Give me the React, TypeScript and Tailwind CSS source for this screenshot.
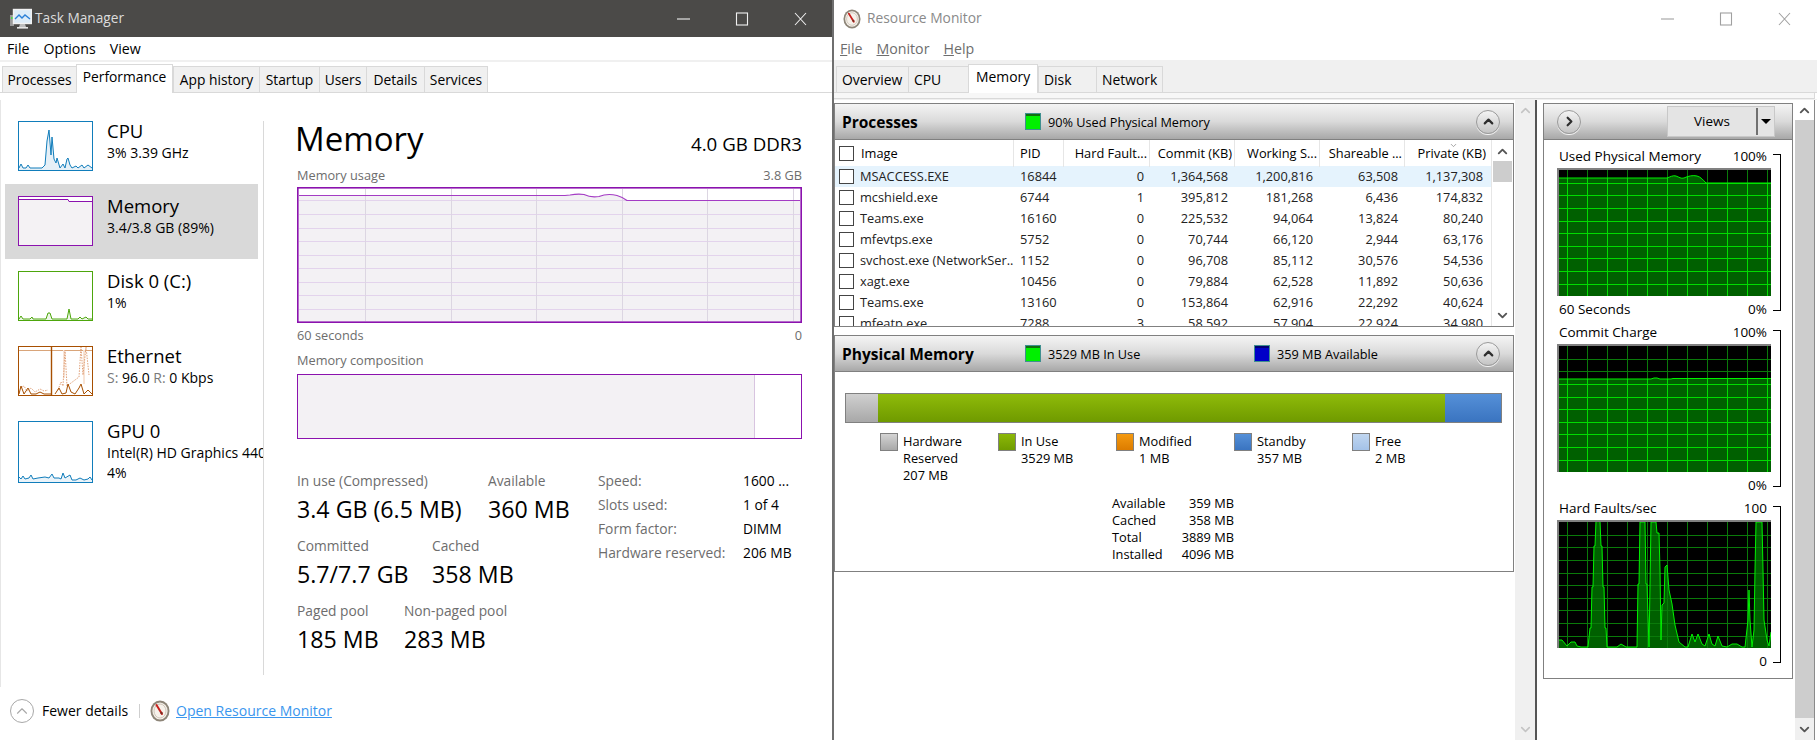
import { ChevronUp, ChevronDown, ChevronRight } from "lucide-react";

const FONT = "font-['Open_Sans','Noto_Sans',sans-serif]";

const tmTabs = [
  { label: "Processes", w: "w-[74px]" },
  { label: "Performance", w: "w-[97px]", active: true },
  { label: "App history", w: "w-[86px]" },
  { label: "Startup", w: "w-[60px]" },
  { label: "Users", w: "w-[47px]" },
  { label: "Details", w: "w-[58px]" },
  { label: "Services", w: "w-[63px]" },
];

const rmTabs = [
  { label: "Overview", w: "w-[72px]" },
  { label: "CPU", w: "w-[60px]" },
  { label: "Memory", w: "w-[70px]", active: true },
  { label: "Disk", w: "w-[58px]" },
  { label: "Network", w: "w-[66px]" },
];

const processes = [
  ["MSACCESS.EXE", "16844", "0", "1,364,568", "1,200,816", "63,508", "1,137,308"],
  ["mcshield.exe", "6744", "1", "395,812", "181,268", "6,436", "174,832"],
  ["Teams.exe", "16160", "0", "225,532", "94,064", "13,824", "80,240"],
  ["mfevtps.exe", "5752", "0", "70,744", "66,120", "2,944", "63,176"],
  ["svchost.exe (NetworkSer...", "1152", "0", "96,708", "85,112", "30,576", "54,536"],
  ["xagt.exe", "10456", "0", "79,884", "62,528", "11,892", "50,636"],
  ["Teams.exe", "13160", "0", "153,864", "62,916", "22,292", "40,624"],
  ["mfeatp.exe", "7288", "3", "58,592", "57,904", "22,924", "34,980"],
];

const legend = [
  { swatch: "from-[#d4d4d4] to-[#a8a8a8]", lines: ["Hardware", "Reserved", "207 MB"] },
  { swatch: "from-[#8cb808] to-[#709c00]", lines: ["In Use", "3529 MB"] },
  { swatch: "from-[#f49a10] to-[#dc7c00]", lines: ["Modified", "1 MB"] },
  { swatch: "from-[#5590d8] to-[#3a74c0]", lines: ["Standby", "357 MB"] },
  { swatch: "from-[#c0d6f0] to-[#a4c2e8]", lines: ["Free", "2 MB"] },
];

const gridV = [10.5, 30.5, 50.5, 70.5, 90.5, 110.5, 130.5, 150.5, 170.5, 190.5, 210.5];
const gridH = [15.5, 27.5, 40.5, 53.5, 65.5, 78.5, 90.5, 103.5, 116.5];

function WinButtons({ color }: { color: string }) {
  return (
    <svg width="130" height="14" viewBox="0 0 130 14" fill="none" stroke={color} strokeWidth="1.1">
      <path d="M0 7h13" />
      <rect x="59.5" y="1" width="11" height="12" />
      <path d="M118 1l11 12M129 1l-11 12" />
    </svg>
  );
}

function TaskIcon() {
  return (
    <svg width="22" height="22" viewBox="0 0 22 22">
      <rect x="0" y="7" width="4" height="11" fill="#9a9a9a" />
      <rect x="1" y="9" width="2" height="2" fill="#4fd04f" />
      <rect x="3.5" y="1.5" width="18" height="14" fill="#dcecf8" stroke="#f2f2f2" strokeWidth="1.4" />
      <path d="M5 11l4-4 3 3 3-3 5 4" fill="none" stroke="#2a80d8" strokeWidth="1.4" />
      <path d="M10 16h5l1 3h-7z" fill="#bdbdbd" />
      <rect x="7" y="19" width="11" height="1.6" fill="#e6e6e6" />
    </svg>
  );
}

function MonitorIcon({ size = 20 }: { size?: number }) {
  return (
    <svg width={size} height={size + 2} viewBox="0 0 20 22">
      <ellipse cx="10" cy="11" rx="9.5" ry="10.5" fill="#8d8578" />
      <ellipse cx="10" cy="11" rx="7.6" ry="8.6" fill="#f6f1ea" />
      <ellipse cx="10" cy="11" rx="6" ry="7" fill="none" stroke="#cfc6ba" strokeWidth="1" />
      <path d="M6.5 5l5.5 9" stroke="#c8201c" strokeWidth="2" strokeLinecap="round" />
      <circle cx="11.5" cy="13" r="1.2" fill="#7a2a20" />
    </svg>
  );
}

function CpuThumb() {
  const d = "M1 47L3 43L5 47L8 47L10 44L12 47L17 47L24 47L27 44L29 20L31 9L33 34L34 16L36 38L38 42L39 37L42 47L45 43L47 47L49 38L50 37L52 44L54 47L58 45L60 47L64 44L66 47L70 44L74 47";
  return (
    <svg width="75" height="50" viewBox="0 0 75 50" className="bg-white shrink-0">
      <path d={`${d}V49H1Z`} fill="#e6f0f7" stroke="none" />
      <path d={d} fill="none" stroke="#117dbb" strokeWidth="1" />
      <rect x="0.5" y="0.5" width="74" height="49" fill="none" stroke="#117dbb" />
    </svg>
  );
}

function MemThumb() {
  return (
    <svg width="75" height="50" viewBox="0 0 75 50" className="shrink-0">
      <rect width="75" height="50" fill="#f4f2f4" />
      <path d="M1 1h73v4H51l-1-1H1z" fill="#ffffff" />
      <path d="M1 3.5h49l1 2h24" fill="none" stroke="#8b12ae" strokeWidth="1" />
      <rect x="0.5" y="0.5" width="74" height="49" fill="none" stroke="#8b12ae" />
    </svg>
  );
}

function DiskThumb() {
  const d = "M1 48L3 45L5 48L12 48L14 46L15 48L28 48L30 42L32 42L34 48L49 48L51 38L53 48L60 48L62 46L64 48L68 46L70 48L74 48";
  return (
    <svg width="75" height="50" viewBox="0 0 75 50" className="bg-white shrink-0">
      <path d={`${d}V49H1Z`} fill="#edf6e7" stroke="none" />
      <path d={d} fill="none" stroke="#4da60c" strokeWidth="1" />
      <rect x="0.5" y="0.5" width="74" height="49" fill="none" stroke="#4da60c" />
    </svg>
  );
}

function EthThumb() {
  return (
    <svg width="75" height="50" viewBox="0 0 75 50" className="bg-white shrink-0">
      <path d="M1 4.5h73" stroke="#d9a57a" strokeWidth="1" />
      <path d="M46 4V32M66 4V38" stroke="#f8e4d6" strokeWidth="2" />
      <path d="M2 42l4-2 3 5 4-3 4 4 5-3 4 2 4-1M40 44l3-8 2 4 2-36 2 36 4-3 8-6 2-30 2 28 3-28 3 28" fill="none" stroke="#e0a078" strokeWidth="1" strokeDasharray="1.5 1.2" />
      <path d="M1 48L3 40L6 48L10 42L13 48L18 48L22 46L26 48L33 48" fill="none" stroke="#a74f01" strokeWidth="1" />
      <path d="M37 48L41 42L44 48L48 47L50 38L53 46L57 48L61 42L63 38L66 48L70 44L74 48" fill="none" stroke="#a74f01" strokeWidth="1" />
      <path d="M33.5 1v48" stroke="#a74f01" strokeWidth="1.4" />
      <rect x="0.5" y="0.5" width="74" height="49" fill="none" stroke="#a74f01" />
    </svg>
  );
}

function GpuThumb() {
  const d = "M1 56L3 58L5 55L7 58L11 57L13 54L15 58L20 57L27 56L31 57L34 53L36 57L41 57L43 58L45 52L47 57L52 54L54 59L58 59L62 57L66 59L70 58L72 56L74 59";
  return (
    <svg width="75" height="62" viewBox="0 0 75 62" className="bg-white shrink-0">
      <path d={`${d}V61H1Z`} fill="#eaf3f9" stroke="none" />
      <path d={d} fill="none" stroke="#117dbb" strokeWidth="1" />
      <rect x="0.5" y="0.5" width="74" height="61" fill="none" stroke="#117dbb" />
    </svg>
  );
}

function UsageChart() {
  const line = "M2 8.5H268L273 8C278 7 282 6.5 287 7.5C292 10 296 10.5 302 9.5C307 7.5 314 7 320 8.5C325 10 327 11 330 13.5H503";
  return (
    <svg width="505" height="136" viewBox="0 0 505 136" className="block">
      <rect width="505" height="136" fill="#f3f1f4" />
      <path d={`${line}V1H2Z`} fill="#ffffff" />
      {[13.5, 27.5, 41.5, 54.5, 68.5, 81.5, 95.5, 108.5, 122.5].map((y) => (
        <path key={y} d={`M2 ${y}H503`} stroke="#e3d3ec" strokeWidth="1" />
      ))}
      {[68.5, 154.5, 239.5, 325.5, 410.5, 496.5].map((x) => (
        <path key={x} d={`M${x} 2V134`} stroke="#dcd6e2" strokeWidth="1" />
      ))}
      <path d={line} fill="none" stroke="#a43cc4" strokeWidth="1.2" />
      <rect x="0.8" y="0.8" width="503.4" height="134.4" fill="none" stroke="#8b12ae" strokeWidth="1.6" />
    </svg>
  );
}

function GreenChart({ id, line, bright }: { id: string; line: string; bright: boolean }) {
  const dark = "#0a7a0a";
  return (
    <svg width="214" height="128" viewBox="0 0 214 128" className="block">
      <defs>
        <clipPath id={id}>
          <path d={`${line}V128H1Z`} />
        </clipPath>
      </defs>
      <rect width="214" height="128" fill="#000000" />
      <path d={`${line}V128H1Z`} fill="#006000" />
      <g stroke={dark} strokeWidth="1">
        {gridV.map((x) => <path key={x} d={`M${x} 0V128`} />)}
        {gridH.map((y) => <path key={y} d={`M0 ${y}H214`} />)}
      </g>
      {bright && (
        <g stroke="#00dc00" strokeWidth="1" clipPath={`url(#${id})`}>
          {gridV.map((x) => <path key={x} d={`M${x} 0V128`} />)}
          {gridH.map((y) => <path key={y} d={`M0 ${y}H214`} />)}
        </g>
      )}
      <path d={line} fill="none" stroke="#00f000" strokeWidth="1" />
      <path d="M1 128V1H214" fill="none" stroke="#808080" strokeWidth="2" />
    </svg>
  );
}

function GraphBlock({ id, title, top, bottomLeft, bottom, line, bright }: { id: string; title: string; top: string; bottomLeft?: string; bottom: string; line: string; bright: boolean }) {
  return (
    <div className="flex h-[176px] w-[228px]">
      <div className="w-[214px]">
        <div className="flex justify-between pl-[2px] pr-[4px] h-[23px] leading-[22px] text-[13.5px] text-black">
          <span>{title}</span>
          <span>{top}</span>
        </div>
        <GreenChart id={id} line={line} bright={bright} />
        <div className="flex justify-between pl-[2px] pr-[4px] h-[25px] leading-[26px] text-[13.5px] text-black">
          <span>{bottomLeft}</span>
          <span>{bottom}</span>
        </div>
      </div>
      <div className="ml-[2px] mt-[9px] w-[8px] h-[157px] border-t-[1.5px] border-r-[1.5px] border-b-[1.5px] border-black" />
    </div>
  );
}

function RoundButton({ dir = "up" }: { dir?: "up" | "right" }) {
  return (
    <div className="w-[24px] h-[24px] rounded-full border border-[#9a9a9a] bg-gradient-to-b from-[#f4f4f4] to-[#c4c4c4] shadow-[0_1px_0_#f4f4f4] flex items-center justify-center">
      {dir === "up" ? (
        <ChevronUp size={15} strokeWidth={3.5} color="#2e2e2e" />
      ) : (
        <ChevronRight size={15} strokeWidth={3.5} color="#2e2e2e" />
      )}
    </div>
  );
}

function Swatch({ blue }: { blue?: boolean }) {
  return (
    <div className={`w-[16px] h-[17px] border border-[#3f8f8f] shrink-0 ${blue ? "bg-[#0000c8]" : "bg-[#00f000]"}`}>
      <div className={`h-[2px] ${blue ? "bg-[#000070]" : "bg-[#107010]"}`} />
    </div>
  );
}

function PanelHeader({ children }: { children: React.ReactNode }) {
  return (
    <div className="flex items-center h-[36px] bg-gradient-to-b from-[#f4f4f4] via-[#dadada] to-[#a8a8a8] border-b border-[#808080]">
      {children}
    </div>
  );
}

function Stat({ label, value, w }: { label: string; value: string; w?: string }) {
  return (
    <div className={w}>
      <div className="h-[20px] leading-[20px] text-[13.75px] text-[#6d6d6d] whitespace-nowrap">{label}</div>
      <div className="h-[32px] mt-[2px] leading-[32px] text-[23.2px] text-black whitespace-nowrap">{value}</div>
    </div>
  );
}

function SideItem({ thumb, title, lines, active }: { thumb: React.ReactNode; title: string; lines: React.ReactNode[]; active?: boolean }) {
  return (
    <div className={`flex h-[75px] w-[253px] ml-[4px] pl-[13px] pt-[12px] gap-[14px] shrink-0 ${active ? "bg-[#d9d9d9]" : ""}`}>
      {thumb}
      <div className="w-[156px] shrink-0 -mt-[2px] overflow-hidden whitespace-nowrap">
        <div className="h-[24px] leading-[24px] text-[18.5px] text-black">{title}</div>
        {lines.map((l, i) => (
          <div key={i} className="h-[20px] leading-[20px] text-[14px] text-black">{l}</div>
        ))}
      </div>
    </div>
  );
}

function TaskManager() {
  return (
    <div className="w-[832px] h-[740px] shrink-0 bg-white flex flex-col">
      <div className="h-[37px] bg-[#4b4a48] flex items-center pl-[10px] pr-[25px] shrink-0">
        <TaskIcon />
        <span className="ml-[3px] text-[#dcdcdc] text-[13.7px]">Task Manager</span>
        <div className="ml-auto"><WinButtons color="#f0f0f0" /></div>
      </div>
      <div className="h-[23px] flex items-center pl-[7px] gap-[14px] text-[14.2px] text-black shrink-0">
        <span>File</span>
        <span>Options</span>
        <span>View</span>
      </div>
      <div className="h-[2px] bg-[#f0f0f0] shrink-0" />
      <div className="h-[31px] flex items-end pl-[2px] border-b border-[#d9d9d9] shrink-0">
        {tmTabs.map((t) => (
          <div
            key={t.label}
            className={`${t.w} shrink-0 text-center whitespace-nowrap text-[13.8px] border border-[#d9d9d9] ${
              t.active
                ? "h-[29px] leading-[24px] bg-white border-b-0 -mb-px relative"
                : "h-[26px] leading-[26px] bg-[#f0f0f0] border-b-0 border-r-0"
            }`}
          >
            {t.label}
          </div>
        ))}
        <div className="w-px h-[26px] bg-[#d9d9d9]" />
      </div>

      <div className="h-[587px] flex shrink-0 border-l border-[#e6e6e6] mt-[7px] -mb-[7px]">
        <div className="w-[262px] shrink-0 pt-[9px] flex flex-col">
          <SideItem thumb={<CpuThumb />} title="CPU" lines={["3%  3.39 GHz"]} />
          <SideItem thumb={<MemThumb />} title="Memory" lines={["3.4/3.8 GB (89%)"]} active />
          <SideItem thumb={<DiskThumb />} title="Disk 0 (C:)" lines={["1%"]} />
          <SideItem
            thumb={<EthThumb />}
            title="Ethernet"
            lines={[<span key="s"><span className="text-[#7a7a7a]">S:</span> 96.0 <span className="text-[#7a7a7a]">R:</span> 0 Kbps</span>]}
          />
          <SideItem thumb={<GpuThumb />} title="GPU 0" lines={["Intel(R) HD Graphics 4400", "4%"]} />
        </div>
        <div className="w-px h-[554px] mt-[21px] bg-[#d9d9d9] shrink-0" />
        <div className="w-[505px] ml-[33px] shrink-0 pt-[16px]">
          <div className="flex justify-between items-end">
            <span className="h-[48px] leading-[46px] text-[33px] text-black -ml-[2px]">Memory</span>
            <span className="h-[28px] leading-[28px] mb-[6px] text-[18.7px] text-black">4.0 GB DDR3</span>
          </div>
          <div className="flex justify-between mt-[2px] h-[20px] leading-[18px] text-[12.75px] text-[#6d6d6d]">
            <span>Memory usage</span>
            <span>3.8 GB</span>
          </div>
          <div className="mt-[1px]"><UsageChart /></div>
          <div className="flex justify-between mt-[3px] h-[20px] leading-[19px] text-[12.75px] text-[#6d6d6d]">
            <span>60 seconds</span>
            <span>0</span>
          </div>
          <div className="mt-[5px] h-[20px] leading-[18px] text-[12.75px] text-[#6d6d6d]">Memory composition</div>
          <div className="mt-[3px] h-[65px] border-[1.5px] border-[#8b12ae] flex">
            <div className="w-[457px] bg-[#f3f1f4] border-r border-[#d8c4e0]" />
            <div className="flex-1 bg-white" />
          </div>
          <div className="flex mt-[32px]">
            <div className="w-[301px] flex flex-col gap-[11px]">
              <div className="flex">
                <Stat label="In use (Compressed)" value="3.4 GB (6.5 MB)" w="w-[191px]" />
                <Stat label="Available" value="360 MB" />
              </div>
              <div className="flex">
                <Stat label="Committed" value="5.7/7.7 GB" w="w-[135px]" />
                <Stat label="Cached" value="358 MB" />
              </div>
              <div className="flex">
                <Stat label="Paged pool" value="185 MB" w="w-[107px]" />
                <Stat label="Non-paged pool" value="283 MB" />
              </div>
            </div>
            <div className="grid grid-cols-[145px_1fr] auto-rows-[24px] items-center text-[13.8px] h-[96px] -mt-[2px] whitespace-nowrap">
              <span className="text-[#6d6d6d]">Speed:</span><span>1600 ...</span>
              <span className="text-[#6d6d6d]">Slots used:</span><span>1 of 4</span>
              <span className="text-[#6d6d6d]">Form factor:</span><span>DIMM</span>
              <span className="text-[#6d6d6d]">Hardware reserved:</span><span>206 MB</span>
            </div>
          </div>
        </div>
      </div>

      <div className="flex-1 flex items-center pl-[10px] text-[14px] pt-[1px]">
        <div className="w-[24px] h-[24px] rounded-full border border-[#a8a8a8] flex items-center justify-center shrink-0">
          <ChevronUp size={18} strokeWidth={1.5} color="#a8a8a8" />
        </div>
        <span className="ml-[8px] w-[97px] text-black">Fewer details</span>
        <div className="w-px h-[14px] bg-[#cfcfcf]" />
        <div className="ml-[10px]"><MonitorIcon /></div>
        <span className="ml-[6px] text-[#3a96ee] underline">Open Resource Monitor</span>
      </div>
    </div>
  );
}

function ResourceMonitor() {
  return (
    <div className="flex-1 h-[740px] border-l-2 border-[#6f6f6f] flex flex-col bg-white">
      <div className="h-[37px] flex items-center pl-[9px] pr-[26px] shrink-0">
        <MonitorIcon size={18} />
        <span className="ml-[6px] text-[#8a8a8a] text-[13.8px]">Resource Monitor</span>
        <div className="ml-auto"><WinButtons color="#a0a0a0" /></div>
      </div>
      <div className="h-[23px] flex items-center pl-[6px] gap-[14px] text-[14.2px] text-[#6d6d6d] shrink-0">
        <span><span className="underline">F</span>ile</span>
        <span><span className="underline">M</span>onitor</span>
        <span><span className="underline">H</span>elp</span>
      </div>
      <div className="h-[33px] bg-[#f0f0f0] flex items-end pl-[2px] border-b border-[#d9d9d9] shrink-0">
        {rmTabs.map((t) => (
          <div
            key={t.label}
            className={`${t.w} shrink-0 whitespace-nowrap text-[13.9px] pl-[5px] border border-[#d9d9d9] ${
              t.active
                ? "h-[29px] leading-[24px] bg-white border-b-0 -mb-px pl-[7px]"
                : "h-[26px] leading-[26px] bg-[#f0f0f0] border-b-0 border-r-0"
            }`}
          >
            {t.label}
          </div>
        ))}
        <div className="w-px h-[26px] bg-[#d9d9d9]" />
      </div>
      <div className="h-[6px] mr-[2px] border-b border-r border-[#d9d9d9] bg-[#f7f7f7] shrink-0" />
      <div className="h-[1px] bg-[#f0f0f0] shrink-0" />

      <div className="flex-1 flex min-h-0 text-[13px] text-black">
        <div className="w-[681px] shrink-0 pt-[3px] bg-white">
          <div className="w-[680px] h-[224px] border border-[#808080] overflow-hidden">
            <PanelHeader>
              <span className="ml-[7px] w-[183px] pt-[2px] text-[15.5px] font-bold">Processes</span>
              <Swatch />
              <span className="ml-[7px] pt-[2px] text-[12.7px]">90% Used Physical Memory</span>
              <div className="ml-auto mr-[13px]"><RoundButton /></div>
            </PanelHeader>
            <div className="flex">
              <div className="w-[656px] shrink-0">
                <div className="grid grid-cols-[179px_50px_86px_85px_85px_85px_86px] h-[26px] leading-[27px] text-[12.8px]">
                  <div className="flex items-center border-r border-[#e6e6e6] pl-[4px]">
                    <div className="w-[15px] h-[15px] border border-[#444] mr-[7px]" />Image
                  </div>
                  <div className="border-r border-[#e6e6e6] pl-[6px]">PID</div>
                  <div className="border-r border-[#e6e6e6] text-right pr-[2px] whitespace-nowrap">Hard Fault...</div>
                  <div className="border-r border-[#e6e6e6] text-right pr-[2px] whitespace-nowrap">Commit (KB)</div>
                  <div className="border-r border-[#e6e6e6] text-right pr-[2px] whitespace-nowrap">Working S...</div>
                  <div className="border-r border-[#e6e6e6] text-right pr-[2px] whitespace-nowrap">Shareable ...</div>
                  <div className="text-right pr-[5px] whitespace-nowrap relative">
                    Private (KB)
                    <ChevronDown size={9} color="#888" className="absolute top-[1px] right-[33px]" />
                  </div>
                </div>
                {processes.map((p, i) => (
                  <div
                    key={i}
                    className={`grid grid-cols-[179px_50px_86px_85px_85px_85px_86px] h-[21px] leading-[21px] text-[12.8px] text-[#222] ${i === 0 ? "bg-[#e5f3fd]" : ""}`}
                  >
                    <div className="flex items-center pl-[4px] whitespace-nowrap overflow-hidden">
                      <div className="w-[15px] h-[15px] border border-[#444] mr-[6px] shrink-0 bg-white" />{p[0]}
                    </div>
                    <div className="pl-[6px]">{p[1]}</div>
                    <div className="text-right pr-[6px]">{p[2]}</div>
                    <div className="text-right pr-[7px]">{p[3]}</div>
                    <div className="text-right pr-[7px]">{p[4]}</div>
                    <div className="text-right pr-[7px]">{p[5]}</div>
                    <div className="text-right pr-[8px]">{p[6]}</div>
                  </div>
                ))}
              </div>
              <div className="w-[22px] h-[186px] flex flex-col items-center bg-white border-l border-[#e6e6e6]">
                <ChevronUp size={15} strokeWidth={3} color="#555" className="mt-[4px]" />
                <div className="w-[19px] h-[21px] bg-[#cdcdcd] mt-[2px]" />
                <ChevronDown size={15} strokeWidth={3} color="#555" className="mt-auto mb-[3px]" />
              </div>
            </div>
          </div>

          <div className="w-[680px] h-[237px] mt-[8px] border border-[#808080]">
            <PanelHeader>
              <span className="ml-[7px] w-[183px] pt-[2px] text-[15.5px] font-bold">Physical Memory</span>
              <Swatch />
              <span className="ml-[7px] pt-[2px] w-[206px] text-[12.7px]">3529 MB In Use</span>
              <Swatch blue />
              <span className="ml-[7px] pt-[2px] text-[12.7px]">359 MB Available</span>
              <div className="ml-auto mr-[13px]"><RoundButton /></div>
            </PanelHeader>
            <div className="ml-[10px] mt-[21px] w-[657px] h-[30px] border border-[#808080] flex">
              <div className="w-[32px] bg-gradient-to-b from-[#d0d0d0] to-[#a8a8a8]" />
              <div className="w-[567px] bg-gradient-to-b from-[#8fbb0a] to-[#6f9a00]" />
              <div className="flex-1 bg-gradient-to-b from-[#5590d8] to-[#3a74c0]" />
            </div>
            <div className="flex ml-[45px] mt-[10px] text-[12.8px]">
              {legend.map((l) => (
                <div key={l.lines[0]} className="w-[118px] flex gap-[5px]">
                  <div className={`w-[18px] h-[18px] border border-[#808080] bg-gradient-to-b ${l.swatch} shrink-0`} />
                  <div className="leading-[17px]">
                    {l.lines.map((t) => <div key={t}>{t}</div>)}
                  </div>
                </div>
              ))}
            </div>
            <div className="ml-[277px] mt-[11px] w-[122px] grid grid-cols-[1fr_auto] text-[12.8px] leading-[17px]">
              <span>Available</span><span className="text-right">359 MB</span>
              <span>Cached</span><span className="text-right">358 MB</span>
              <span>Total</span><span className="text-right">3889 MB</span>
              <span>Installed</span><span className="text-right">4096 MB</span>
            </div>
          </div>
        </div>

        <div className="w-[20px] shrink-0 bg-[#f0f0f0] flex flex-col items-center py-[3px]">
          <ChevronUp size={15} strokeWidth={2.5} color="#c4c4c4" />
          <ChevronDown size={15} strokeWidth={2.5} color="#c4c4c4" className="mt-auto" />
        </div>
        <div className="w-[2px] shrink-0 bg-[#555]" />

        <div className="w-[258px] shrink-0 pt-[3px] pl-[6px]">
          <div className="w-[250px] h-[576px] border border-[#808080]">
            <PanelHeader>
              <div className="ml-[13px]"><RoundButton dir="right" /></div>
              <div className="ml-[86px] w-[108px] h-[31px] bg-[#e4e4e4] border border-[#c8c8c8] flex items-center">
                <span className="w-[88px] text-center text-[13.5px]">Views</span>
                <div className="w-[1.5px] h-[27px] bg-[#707070]" />
                <div className="ml-[3px] w-0 h-0 border-l-[5px] border-r-[5px] border-t-[5px] border-l-transparent border-r-transparent border-t-black" />
              </div>
            </PanelHeader>
            <div className="pl-[13px] pt-[5px]">
              <GraphBlock
                id="used"
                title="Used Physical Memory"
                top="100%"
                bottomLeft="60 Seconds"
                bottom="0%"
                bright
                line="M1 10H110C113 9 116 7 119 8C122 9 124 11 127 10C131 8 136 7 140 8C144 9 146 12 149 15H214"
              />
              <GraphBlock
                id="commit"
                title="Commit Charge"
                top="100%"
                bottom="0%"
                bright
                line="M1 35H94L97 34L100 34L103 35L114 35L116 34.5H214"
              />
              <GraphBlock
                id="faults"
                title="Hard Faults/sec"
                top="100"
                bottom="0"
                bright={false}
                line="M1 120L5 120L10 126L14 122L18 122L20 126L24 127L31 127L33 108L34 108L35 67L36 67L37 26L38 26L39 1L43 1L44 26L45 26L46 67L47 67L48 108L49 108L50 127L54 127L56 127L60 127L64 124L69 127L80 127L81 64L82 64L83 2L88 2L89 64L90 64L92 127L93 64L94 2L99 2L100 13L102 13L103 50L104 120L105 85L107 83L108 47L110 45L112 70L115 84L118 105L122 122L128 127L131 127L135 114L138 122L141 114L145 124L148 126L152 114L155 124L158 126L161 116L165 126L170 127L175 124L180 124L185 127L188 127L191 100L192 70L193 100L195 127L197 110L198 50L199 2L205 2L206 50L207 100L210 120L212 126L214 112"
              />
            </div>
          </div>
        </div>

        <div className="w-[19px] shrink-0 flex flex-col items-center">
          <div className="h-[20px] flex items-center bg-white w-full justify-center">
            <ChevronUp size={15} strokeWidth={3} color="#555" />
          </div>
          <div className="w-full h-[598px] bg-[#cdcdcd]" />
          <div className="w-full flex-1 bg-[#f0f0f0] flex items-center justify-center">
            <ChevronDown size={15} strokeWidth={3} color="#555" />
          </div>
        </div>
        <div className="w-px shrink-0 bg-[#8a8a8a]" />
      </div>
    </div>
  );
}

export default function App() {
  return (
    <div className={`flex w-[1817px] h-[740px] overflow-hidden bg-white ${FONT}`}>
      <TaskManager />
      <ResourceMonitor />
    </div>
  );
}
